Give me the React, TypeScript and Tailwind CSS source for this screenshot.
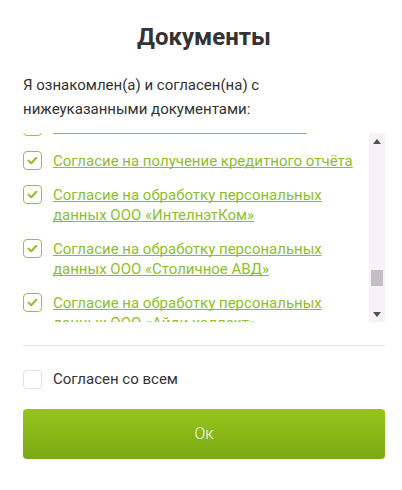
import React, { useEffect, useRef } from 'react';

const documents = [
  'Договор об использовании аналога собственноручной подписи',
  'Соглашение об использовании АСП',
  'Согласие на получение кредитного отчёта',
  'Согласие на обработку персональных данных ООО «ИнтелнэтКом»',
  'Согласие на обработку персональных данных ООО «Столичное АВД»',
  'Согласие на обработку персональных данных ООО «Айди коллект»',
  'Согласие на обработку персональных данных ООО «ЦДУ»',
  'Согласие на получение рекламной рассылки',
];

const CheckBox: React.FC<{ checked?: boolean }> = ({ checked }) => (
  <span
    className={`w-[19px] h-[19px] shrink-0 rounded-[4px] border flex items-center justify-center bg-white ${
      checked ? 'border-[#97c33b]' : 'border-[#e2e2e2]'
    }`}
  >
    {checked && (
      <svg viewBox="0 0 19 19" className="w-[19px] h-[19px]">
        <path d="M5 9.6 L8.1 12.6 L13.8 6.4" fill="none" stroke="#8dbf2b" strokeWidth="2.2" strokeLinecap="round" strokeLinejoin="round" />
      </svg>
    )}
  </span>
);

export default function App() {
  const listRef = useRef<HTMLDivElement>(null);
  const anchorRef = useRef<HTMLLIElement>(null);

  // keep the list scrolled the way it is in the dialog
  useEffect(() => {
    if (listRef.current && anchorRef.current) {
      listRef.current.scrollTop = anchorRef.current.offsetTop - 18;
    }
  }, []);

  return (
    <div className="w-[402px] h-[490px] bg-white pl-[23px] pr-[17px] pt-[21px] font-['Roboto',sans-serif] text-[#333]">
      <h2 className="text-center text-[24px] leading-[32px] font-bold text-[#333]">Документы</h2>

      <p className="mt-[20px] text-[15px] leading-[24px]">
        Я ознакомлен(а) и согласен(на) с
        <br />
        нижеуказанными документами:
      </p>

      <div className="mt-[12px] flex h-[189px]">
        <div ref={listRef} className="relative flex-1 overflow-hidden">
          <ul className="flex flex-col gap-[14px] pb-[20px]">
            {documents.map((doc, i) => (
              <li key={doc} ref={i === 2 ? anchorRef : undefined} className="flex items-start gap-[11px]">
                <CheckBox checked />
                <a className="text-[15px] leading-[20px] text-[#8dbf2b] underline decoration-[1px] [text-decoration-skip-ink:none]">
                  {doc}
                </a>
              </li>
            ))}
          </ul>
        </div>

        <div className="w-[16px] shrink-0 bg-[#f6f2f6] flex flex-col">
          <div className="h-[16px] flex items-center justify-center">
            <svg width="8" height="5" viewBox="0 0 8 5">
              <polygon points="0,5 8,5 4,0" fill="#505050" />
            </svg>
          </div>
          <div className="flex-1 px-[2px]">
            <div className="mt-[121px] h-[16px] bg-[#c1bfc3]" />
          </div>
          <div className="h-[16px] flex items-center justify-center">
            <svg width="8" height="5" viewBox="0 0 8 5">
              <polygon points="0,0 8,0 4,5" fill="#505050" />
            </svg>
          </div>
        </div>
      </div>

      <div className="mt-[23px] border-t border-[#e2e2e2]" />

      <label className="mt-[23px] flex items-center gap-[11px] h-[20px]">
        <CheckBox />
        <span className="text-[15px] leading-[20px] text-[#333]">Согласен со всем</span>
      </label>

      <button className="mt-[20px] w-full h-[50px] rounded-[4px] bg-gradient-to-b from-[#97c31c] to-[#79aa12] text-white text-[16px] font-light">
        Ок
      </button>
    </div>
  );
}
